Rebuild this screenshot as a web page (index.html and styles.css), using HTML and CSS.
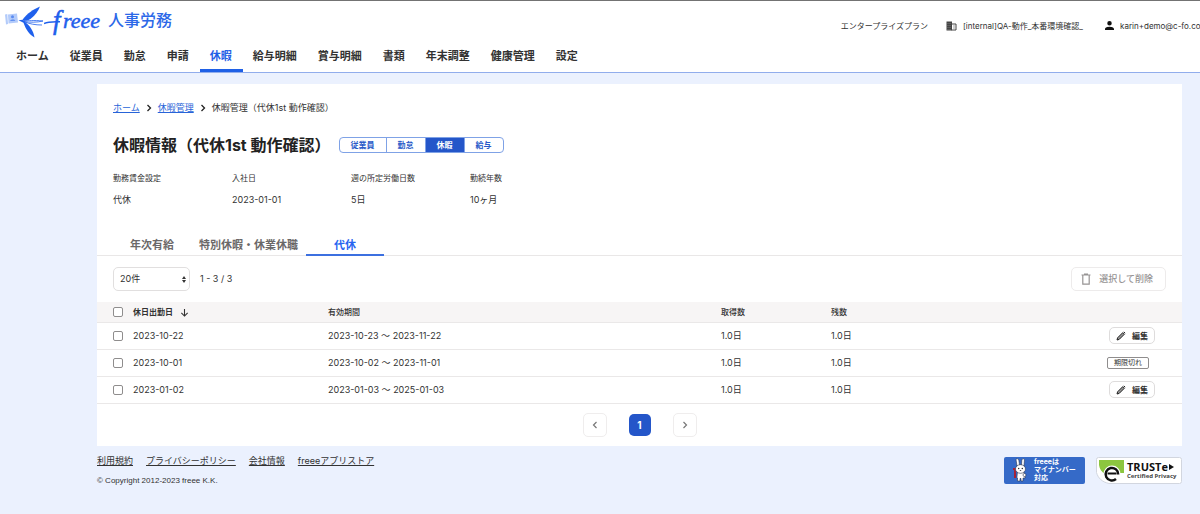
FILE: index.html
```html
<!DOCTYPE html>
<html lang="ja">
<head>
<meta charset="utf-8">
<meta name="viewport" content="width=device-width, initial-scale=1">
<title>休暇情報 - freee人事労務</title>
<link rel="stylesheet" href="styles.css">
</head>
<body>
<header class="header">
  <div class="header-top">
    <a class="logo" href="#" aria-label="freee 人事労務">
      <svg class="logo-bird" viewBox="0 0 44 36" aria-hidden="true">
        <g fill="#b3cbfa"><path d="M8 10.500 17 9.500 18 18.500 8.500 19.500z"/><path d="M5 10.500 7.300 10 8 20 6 20.500z"/></g>
        <g fill="#5a8bf0"><circle cx="12.500" cy="12.800" r="1.500"/><path d="M10 17c.3-2 5-2.200 5.300-.2z"/></g>
        <path fill="#1f60ec" d="M40 2.500C33 5.500 27 9.500 22.500 15.800L24 16.800C27 16.600 29 16 31 14.500 35 11.500 38.500 7 40 2.500z"/>
        <path fill="#1f60ec" d="M18.500 16.300 22.500 15.800 25 18C30 21.500 33.500 27 34.500 33.500 29.500 30.500 26 26 23.500 18.800z"/>
        <path fill="none" stroke="#1f60ec" stroke-width=".8" d="M23 16.800C29 17 33 16 43 17 37 18.500 30 18.500 23.500 17.500 30 20 35 21 42 21"/>
      </svg>
      <svg class="logo-word" viewBox="0 0 60 36" role="img" aria-label="freee">
        <path d="M0 19.500C4 17.500 8 17.500 16 17.800" fill="none" stroke="#1f60ec" stroke-width="1.500"/>
        <text class="logo-text" x="19" y="24">reee</text>
        <text class="logo-text logo-initial" x="9" y="25">f</text>
      </svg>
      <span class="logo-product">人事労務</span>
    </a>
    <div class="account">
      <span>エンタープライズプラン</span>
      <span class="account-item company">
        <svg class="icon-company" viewBox="1 2 22 20" aria-hidden="true"><path fill="#444" d="M2 3h11v18H2z"/><path fill="none" stroke="#444" stroke-width="2" d="M12 8h9v12h-9"/><path fill="#444" d="M16 11h2v2h-2zm0 4h2v2h-2z"/><path fill="#aaa" d="M4 6h2v1H4zm4 0h2v1H8zM4 10h2v1H4zm4 0h2v1H8zm-4 4h2v1H4zm4 0h2v1H8zm-4 4h2v1H4zm4 0h2v1H8z"/></svg>
        <span>[internal]QA-動作_本番環境確認_</span>
      </span>
      <span class="account-item">
        <svg class="icon-user" viewBox="4 4 16 16" aria-hidden="true"><path fill="#111" d="M12 12a4 4 0 1 0 0-8 4 4 0 0 0 0 8zm0 2c-2.700 0-8 1.300-8 4v2h16v-2c0-2.700-5.300-4-8-4z"/></svg>
        <span class="account-mail">karin+demo@c-fo.co</span>
      </span>
    </div>
  </div>
  <nav class="nav">
    <a href="#">ホーム</a><a href="#">従業員</a><a href="#">勤怠</a><a href="#">申請</a><a href="#" class="is-active" aria-current="page">休暇</a><a href="#">給与明細</a><a href="#">賞与明細</a><a href="#">書類</a><a href="#">年末調整</a><a href="#">健康管理</a><a href="#">設定</a>
  </nav>
</header>

<main class="main">
  <nav class="breadcrumb" aria-label="パンくず">
    <a href="#">ホーム</a>
    <svg viewBox="0 0 6 8" aria-hidden="true"><path d="M1.500 1 4.500 4 1.500 7"/></svg>
    <a href="#">休暇管理</a>
    <svg viewBox="0 0 6 8" aria-hidden="true"><path d="M1.500 1 4.500 4 1.500 7"/></svg>
    <span>休暇管理（代休1st 動作確認）</span>
  </nav>
  <div class="title-row">
    <h1>休暇情報（代休1st 動作確認）</h1>
    <div class="segments">
      <a href="#">従業員</a><a href="#">勤怠</a><a href="#" class="is-active">休暇</a><a href="#">給与</a>
    </div>
  </div>
  <dl class="summary">
    <div><dt>勤務賃金設定</dt><dd>代休</dd></div>
    <div><dt>入社日</dt><dd>2023-01-01</dd></div>
    <div><dt>週の所定労働日数</dt><dd>5日</dd></div>
    <div><dt>勤続年数</dt><dd>10ヶ月</dd></div>
  </dl>
  <nav class="tabs">
    <a href="#">年次有給</a><a href="#">特別休暇・休業休職</a><a href="#" class="is-active">代休</a>
  </nav>
  <div class="toolbar">
    <span class="select-wrap">
      <select class="page-size" aria-label="表示件数"><option>20件</option></select>
      <svg class="select-arrows" viewBox="0 0 4 7" aria-hidden="true"><path fill="#333" d="M2 0 4 3H0zM2 7 0 4h4z"/></svg>
    </span>
    <span>1 - 3 / 3</span>
    <button class="delete" type="button" disabled>
      <svg viewBox="0 0 10 12" aria-hidden="true"><path fill="none" stroke="#969393" stroke-width="1.200" d="M.500 2h9M3 1h4M1.800 2v9.200h6.400V2"/></svg>
      選択して削除
    </button>
  </div>
  <table class="table">
    <colgroup><col class="col-check"><col class="col-date"><col class="col-period"><col class="col-num"><col class="col-num"><col></colgroup>
    <thead>
      <tr>
        <th><input type="checkbox" aria-label="すべて選択"></th>
        <th class="sorted">休日出勤日<svg viewBox="0 0 10 10" aria-hidden="true"><path d="M5 1v8M1.500 5.500 5 9l3.500-3.500"/></svg></th>
        <th>有効期間</th><th>取得数</th><th>残数</th><th></th>
      </tr>
    </thead>
    <tbody>
      <tr>
        <td><input type="checkbox" aria-label="2023-10-22を選択"></td>
        <td>2023-10-22</td><td>2023-10-23 〜 2023-11-22</td><td>1.0日</td><td>1.0日</td>
        <td class="action"><button class="edit" type="button"><svg viewBox="0 0 10 10" aria-hidden="true"><path d="M1 9l.6-2.200L6.800 1.600 8.400 3.200 3.200 8.400zM7.800.800 9.200 2.200"/></svg>編集</button></td>
      </tr>
      <tr>
        <td><input type="checkbox" aria-label="2023-10-01を選択"></td>
        <td>2023-10-01</td><td>2023-10-02 〜 2023-11-01</td><td>1.0日</td><td>1.0日</td>
        <td class="action"><span class="expired">期限切れ</span></td>
      </tr>
      <tr>
        <td><input type="checkbox" aria-label="2023-01-02を選択"></td>
        <td>2023-01-02</td><td>2023-01-03 〜 2025-01-03</td><td>1.0日</td><td>1.0日</td>
        <td class="action"><button class="edit" type="button"><svg viewBox="0 0 10 10" aria-hidden="true"><path d="M1 9l.6-2.200L6.800 1.600 8.400 3.200 3.200 8.400zM7.800.800 9.200 2.200"/></svg>編集</button></td>
      </tr>
    </tbody>
  </table>
  <nav class="pager" aria-label="ページ">
    <button type="button" aria-label="前へ"><svg viewBox="0 0 6 8" aria-hidden="true"><path d="M4.500 1 1.500 4 4.500 7"/></svg></button>
    <button type="button" class="current" aria-current="page">1</button>
    <button type="button" aria-label="次へ"><svg viewBox="0 0 6 8" aria-hidden="true"><path d="M1.500 1 4.500 4 1.500 7"/></svg></button>
  </nav>
</main>

<footer class="footer">
  <div>
    <div class="footer-links">
      <a href="#">利用規約</a><a href="#">プライバシーポリシー</a><a href="#">会社情報</a><a href="#">freeeアプリストア</a>
    </div>
    <small class="copyright">© Copyright 2012-2023 freee K.K.</small>
  </div>
  <div class="badges">
    <a href="#" class="mynumber" aria-label="freeeはマイナンバー対応">
      <svg viewBox="0 0 16 24" aria-hidden="true">
        <path fill="#a52338" d="M1 10h5v2H4v8H2v-8H1z"/>
        <g fill="#fff" stroke="#2a3550" stroke-width=".6">
          <path d="M5 8 4 1.500C4.500.500 6.500.500 6.800 2L7.500 7h2L9.800 2c.4-1.500 2.300-1.500 2.700-.4L12 8z"/>
          <path d="M5.500 14h6.500l1.200 6H11v3H9v-2.500H8V23H5.500v-3H4.800z"/>
          <ellipse cx="8.500" cy="11" rx="5" ry="4.300"/>
          <circle cx="12.500" cy="17" r="1.500"/>
        </g>
        <g fill="#222"><circle cx="6.700" cy="10.500" r=".7"/><circle cx="10.300" cy="10.500" r=".7"/><path d="M7.500 12h2l-1 1z"/></g>
      </svg>
      <span>freeeは<br>マイナンバー<br>対応</span>
    </a>
    <a href="#" class="truste" aria-label="TRUSTe Certified Privacy">
      <svg viewBox="0 0 86 27" aria-hidden="true">
        <path fill="#fff" stroke="#d2d6df" d="M2.500.500h81a2 2 0 0 1 2 2v22a2 2 0 0 1-2 2H13C6 25 2 21 .500 15.500V2.500a2 2 0 0 1 2-2z"/>
        <path fill="#8cc63f" d="M3 3h25v13h-5L16 10l-7 7C5.500 15 3.500 12 3 8z"/>
        <circle cx="16" cy="17" r="8.500" fill="#fff"/>
        <path d="M11.500 16.500h9" fill="none" stroke="#111" stroke-width="2"/>
        <path d="M22.200 17.500A6.300 6.300 0 1 0 20 22" fill="none" stroke="#111" stroke-width="2.500"/>
        <path fill="#111" d="m73 7 5 3-5 3z"/>
        <text class="truste-name" x="31" y="14">TRUSTe</text>
        <text class="truste-sub" x="31" y="21">Certified Privacy</text>
      </svg>
    </a>
  </div>
</footer>
</body>
</html>
```

FILE: styles.css
```css
* { box-sizing: border-box; }

body {
  margin: 0;
  min-height: 100vh;
  background: #ebf1fe;
  color: #323232;
  font-family: Inter, "Noto Sans CJK JP", sans-serif;
  font-size: 9px;
  line-height: 14px;
}

a { color: inherit; text-decoration: none; }
button, select { font: inherit; color: inherit; }

/* Header */
.header {
  background: #fff;
  border-top: 1px solid #737373;
  border-bottom: 1px solid #91adec;
}
.header-top {
  display: flex;
  align-items: center;
  justify-content: space-between;
  height: 41px;
}
.logo { display: flex; align-items: center; color: #2c68e8; }
.logo-bird { width: 44px; height: 36px; }
.logo-word { width: 60px; height: 36px; margin-right: 4px; }
.logo-text {
  font: italic 22px "Liberation Serif", serif;
  fill: #1f60ec;
  stroke: #1f60ec;
  stroke-width: 0.5px;
}
.logo-initial { font-size: 27px; }
.logo-product { padding-bottom: 3px; font-size: 16px; line-height: 20px; font-weight: 500; }

.account {
  display: flex;
  align-items: center;
  gap: 18px;
  padding-top: 8px;
  font-size: 8px;
  white-space: nowrap;
}
.account-item { display: flex; align-items: center; gap: 6px; }
.company { margin-right: 4px; }
.icon-company { width: 11px; height: 10px; }
.icon-user { width: 9px; height: 9px; }
.account-mail { width: 80px; overflow: hidden; }

.nav { display: flex; padding-left: 6px; }
.nav a {
  padding: 6px 11px 5px 10px;
  border-bottom: 3px solid transparent;
  font-size: 11px;
  line-height: 16px;
  font-weight: 700;
}
.nav .is-active { color: #1f60e6; border-color: #1f60e6; }

/* Content card */
.main { margin: 11px 18px 0 97px; padding: 17px 0 9px; background: #fff; }

.breadcrumb { display: flex; align-items: center; gap: 6px; padding: 0 16px; }
.breadcrumb a { color: #2864d8; text-decoration: underline; }
.breadcrumb svg { width: 6px; height: 8px; }
.breadcrumb path { fill: none; stroke: #222; stroke-width: 1.3; }

.title-row { display: flex; align-items: center; gap: 8px; padding: 17px 16px 0; }
h1 { margin: 0; font-size: 16px; line-height: 26px; font-weight: 700; color: #222; }
.segments {
  display: flex;
  overflow: hidden;
  border: 1px solid #7fa2e6;
  border-radius: 4px;
  color: #285ac8;
  font-size: 8px;
  line-height: 14px;
  font-weight: 700;
}
.segments a { padding: 0 11px; }
.segments a + a { border-left: 1px solid #7fa2e6; }
.segments .is-active { background: #2456c9; color: #fff; }

.summary {
  display: grid;
  grid-template-columns: repeat(4, 119px);
  margin: 0;
  padding: 13px 16px 0;
}
.summary dt { font-size: 8px; }
.summary dd { margin: 8px 0 0; }

.tabs {
  display: flex;
  margin-top: 28px;
  padding: 0 16px;
  border-bottom: 1px solid #e9e7e7;
  font-size: 11px;
  line-height: 16px;
  font-weight: 700;
  color: #6b6868;
}
.tabs a {
  min-width: 78px;
  margin-bottom: -1px;
  padding: 2px 8px 1px;
  border-bottom: 2px solid transparent;
  text-align: center;
}
.tabs .is-active { color: #2864f0; border-color: #3c70e0; }

.toolbar { display: flex; align-items: center; gap: 10px; padding: 11px 16px; }
.select-wrap { position: relative; }
.page-size {
  display: block;
  appearance: none;
  width: 77px;
  height: 24px;
  padding: 0 6px;
  border: 1px solid #e1dfdf;
  border-radius: 5px;
  background: #fff;
}
.select-arrows { position: absolute; right: 4px; top: 9px; width: 4px; height: 7px; }
.delete {
  display: flex;
  align-items: center;
  gap: 8px;
  height: 24px;
  margin-left: auto;
  padding: 0 12px 0 9px;
  border: 1px solid #edebeb;
  border-radius: 5px;
  background: #fff;
  color: #969393;
  font-weight: 500;
}
.delete svg { width: 10px; height: 12px; }

/* Table */
.table { width: 100%; table-layout: fixed; border-collapse: collapse; }
.col-check { width: 36px; }
.col-date { width: 195px; }
.col-period { width: 393px; }
.col-num { width: 110px; }
.table th, .table td { height: 27px; padding: 0; border-bottom: 1px solid #eae8e8; text-align: left; }
.table th { height: 20px; background: #f7f5f5; font-size: 8px; font-weight: 500; }
.table th.sorted { font-weight: 700; }
.sorted svg { width: 9px; height: 9px; margin-left: 7px; vertical-align: -2px; }
.sorted path { fill: none; stroke: #333; stroke-width: 1.2; }
.table input {
  appearance: none;
  display: block;
  width: 10px;
  height: 10px;
  margin: 0 0 0 16px;
  border: 1px solid #8f8d8d;
  border-radius: 2px;
  background: #fff;
}
.table .action { padding-right: 27px; text-align: right; }
.edit {
  display: inline-flex;
  align-items: center;
  gap: 6px;
  height: 17px;
  padding: 0 6px;
  border: 1px solid #dedcdc;
  border-radius: 5px;
  background: #fff;
  font-size: 8px;
  font-weight: 700;
  vertical-align: middle;
}
.edit svg { width: 10px; height: 10px; }
.edit path { fill: #999; stroke: #222; }
.expired {
  display: inline-block;
  margin-right: 6px;
  padding: 0 6px;
  border: 1px solid #8f8d8d;
  border-radius: 2px;
  font-size: 7px;
  line-height: 10px;
  vertical-align: middle;
}

.pager { display: flex; align-items: center; justify-content: center; gap: 22px; padding-top: 9px; }
.pager button {
  display: grid;
  place-items: center;
  width: 24px;
  height: 24px;
  padding: 0;
  border: 1px solid #efeded;
  border-radius: 5px;
  background: #fff;
}
.pager .current {
  width: 22px;
  height: 22px;
  border: 0;
  background: #2456c9;
  color: #fff;
  font-size: 10px;
  font-weight: 700;
}
.pager svg { width: 6px; height: 8px; }
.pager path { fill: none; stroke: #777; stroke-width: 1.2; }

/* Footer */
.footer { display: flex; justify-content: space-between; padding: 8px 18px 16px 97px; }
.footer-links { display: flex; gap: 13px; }
.footer-links a { text-decoration: underline; }
.copyright { display: block; margin-top: 6px; font: 8px/14px "Liberation Sans", sans-serif; }
.badges { display: flex; align-items: flex-start; gap: 11px; padding-top: 3px; }
.mynumber {
  display: flex;
  align-items: center;
  gap: 6px;
  width: 81px;
  height: 27px;
  padding-left: 8px;
  border-radius: 2px;
  background: #356ac8;
  color: #fff;
  font-size: 7px;
  line-height: 8px;
  font-weight: 700;
  white-space: nowrap;
}
.mynumber svg { width: 16px; height: 24px; }
.truste svg { display: block; width: 86px; height: 27px; }
.truste-name { font: 700 11px "Open Sans", sans-serif; fill: #111; }
.truste-sub { font: 700 6px "Open Sans", sans-serif; fill: #444; }
```
